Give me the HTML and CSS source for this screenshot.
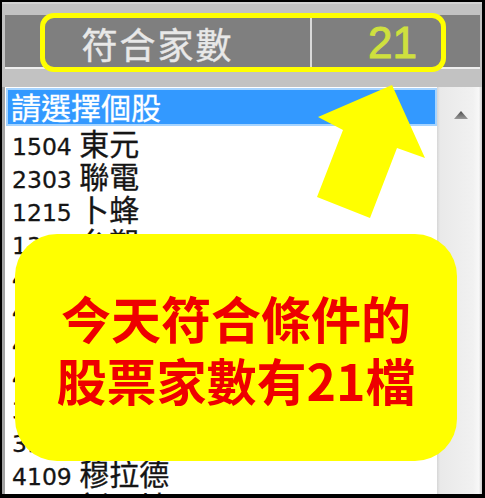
FILE: index.html
```html
<!DOCTYPE html>
<html lang="zh-Hant">
<head>
<meta charset="utf-8">
<title>符合家數</title>
<link rel="stylesheet" href="styles.css">
</head>
<body>
<div class="frame">
  <div class="header">
    <div class="bar">
      <div class="cell label">符合家數</div>
      <div class="divider"></div>
      <div class="cell count">21</div>
    </div>
  </div>
  <div class="listbox">
    <ul class="list">
      <li class="selected">請選擇個股</li>
      <li class="item"><span class="code">1504 </span><span class="name">東元</span></li>
      <li class="item"><span class="code">2303 </span><span class="name">聯電</span></li>
      <li class="item"><span class="code">1215 </span><span class="name">卜蜂</span></li>
      <li class="item"><span class="code">1301 </span><span class="name">台塑</span></li>
      <li class="item"><span class="code">4128 </span><span class="name">中天</span></li>
      <li class="item"><span class="code">4142 </span><span class="name">國光生</span></li>
      <li class="item"><span class="code">4114 </span><span class="name">健喬</span></li>
      <li class="item"><span class="code">4162 </span><span class="name">智擎</span></li>
      <li class="item"><span class="code">3176 </span><span class="name">基亞</span></li>
      <li class="item"><span class="code">3164 </span><span class="name">景岳</span></li>
      <li class="item"><span class="code">4109 </span><span class="name">穆拉德</span></li>
      <li class="item"><span class="code">8940 </span><span class="name">新天地</span></li>
    </ul>
    <div class="scrollbar">
      <svg class="up" width="14" height="9" viewBox="0 0 14 9">
        <defs>
          <linearGradient id="ug" x1="0" y1="0" x2="0" y2="1">
            <stop offset="0" stop-color="#4a4a4a"/>
            <stop offset="1" stop-color="#9a9a9a"/>
          </linearGradient>
        </defs>
        <polygon points="7,0 14,8 0,8" fill="url(#ug)"/>
      </svg>
    </div>
  </div>
  <div class="highlight"></div>
  <svg class="arrow" width="485" height="498" viewBox="0 0 485 498">
    <polygon points="392,85 425,158 397,148 370,218 317,197 343,130 318,117" fill="#ffff00"/>
  </svg>
  <div class="callout">今天符合條件的<br>股票家數有21檔</div>
</div>
</body>
</html>
```
FILE: styles.css
```css
html, body {
  margin: 0;
  padding: 0;
  background: #000;
}

.frame {
  position: relative;
  box-sizing: border-box;
  width: 485px;
  height: 498px;
  border-style: solid;
  border-color: #000;
  border-width: 2px 3px 4px 2px;
  overflow: hidden;
  display: flex;
  flex-direction: column;
  background: #fff;
}

.header {
  box-sizing: border-box;
  height: 85px;
  flex: none;
  background: #c2c2c2;
  border-top: 2px solid #d2d2d2;
  padding: 11px 2px 0 3px;
}

.bar {
  display: flex;
  height: 52px;
  background: #7f7f7f;
  border-bottom: 2px solid #eeeeee;
}

.cell {
  display: flex;
  align-items: center;
  padding-top: 4px;
  box-sizing: border-box;
}

.label {
  width: 305px;
  justify-content: center;
  font-family: "Noto Sans CJK TC", sans-serif;
  font-size: 36px;
  letter-spacing: 2px;
  color: #e8e8e8;
  -webkit-text-stroke: 0.4px #e8e8e8;
}

.divider {
  width: 2px;
  background: #d9d9d9;
}

.count {
  flex: 1;
  justify-content: flex-end;
  padding-right: 63px;
  font-family: "Liberation Sans", Arial, sans-serif;
  font-size: 44px;
  color: #cfe03e;
  -webkit-text-stroke: 1px #cfe03e;
}

.listbox {
  flex: 1;
  display: flex;
  min-height: 0;
  border-left: 3px solid #a3a3a3;
  background: #fff;
}

.list {
  list-style: none;
  margin: 0;
  padding: 1px 0 0 0;
  width: 432px;
  flex: none;
  overflow: hidden;
}

.selected {
  box-sizing: border-box;
  height: 38px;
  margin-left: 1px;
  border: 2px solid #a6d4ff;
  background: #3399ff;
  color: #fff;
  padding-left: 3px;
  font-family: "Noto Sans CJK TC", sans-serif;
  font-size: 30px;
  line-height: 33px;
  white-space: nowrap;
  -webkit-text-stroke: 0.3px #fff;
}

.item {
  height: 33px;
  line-height: 33px;
  padding-left: 7px;
  white-space: nowrap;
  font-family: "Noto Sans CJK TC", sans-serif;
  font-size: 30px;
  color: #151515;
  -webkit-text-stroke: 0.3px #151515;
}

.code {
  font-family: "DejaVu Sans", sans-serif;
  font-size: 23.5px;
  line-height: 33px;
  white-space: pre;
}

.name {
  font-family: "Noto Sans CJK TC", sans-serif;
  font-size: 30px;
  line-height: 33px;
}

.scrollbar {
  flex: 1;
  display: flex;
  justify-content: center;
  align-items: flex-start;
  padding: 24px 0 0 3px;
  background: linear-gradient(to right, #d6d6d6 0, #e9e9e9 3px, #f1f1f1 80%, #f8f8f8 93%, #cfcfcf 100%);
}

.up {
  display: block;
}

.highlight {
  position: absolute;
  left: 38px;
  top: 11px;
  width: 406px;
  height: 59px;
  box-sizing: border-box;
  border: 5px solid #ffff00;
  border-radius: 14px;
}

.arrow {
  position: absolute;
  left: -2px;
  top: -2px;
}

.callout {
  position: absolute;
  left: 13px;
  top: 232px;
  width: 442px;
  height: 227px;
  border-radius: 42px;
  background: #ffff00;
  display: flex;
  align-items: center;
  justify-content: center;
  text-align: center;
  font-family: "Noto Sans CJK TC", sans-serif;
  font-weight: 700;
  font-size: 50px;
  line-height: 62px;
  color: #ee0000;
}
```
